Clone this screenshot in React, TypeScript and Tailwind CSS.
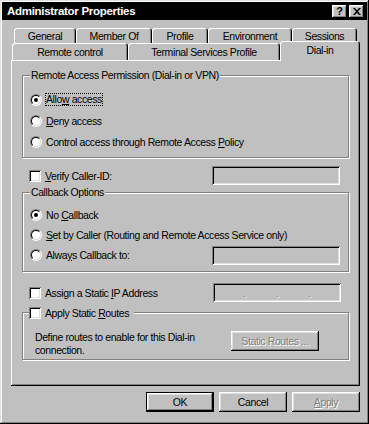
import React from "react";

const RAISED =
  "shadow-[inset_-1px_-1px_0_#000,inset_1px_1px_0_#fff,inset_-2px_-2px_0_#808080,inset_2px_2px_0_#dfdfdf]";
const SUNKEN =
  "shadow-[inset_1px_1px_0_#808080,inset_-1px_-1px_0_#fff,inset_2px_2px_0_#000,inset_-2px_-2px_0_#dfdfdf]";
const ETCHED = "border border-[#808080] shadow-[1px_1px_0_#fff,inset_1px_1px_0_#fff]";
const DISABLED = "text-[#808080] [text-shadow:1px_1px_0_#fff]";

function Radio({ checked }: { checked?: boolean }) {
  return (
    <span className="inline-flex w-[12px] h-[12px] shrink-0 rounded-full border border-t-[#808080] border-l-[#808080] border-r-white border-b-white">
      <span className="flex w-full h-full items-center justify-center rounded-full border border-t-black border-l-black border-r-[#dfdfdf] border-b-[#dfdfdf] bg-white">
        {checked && <span className="w-[4px] h-[4px] rounded-full bg-black" />}
      </span>
    </span>
  );
}

function Check() {
  return <span className={`inline-block w-[12px] h-[12px] shrink-0 bg-white ${SUNKEN}`} />;
}

function TextBox({ children }: { children?: React.ReactNode }) {
  return (
    <div className={`w-[128px] h-[19px] shrink-0 bg-[#c0c0c0] ${SUNKEN} flex items-center justify-evenly`}>
      {children}
    </div>
  );
}

function Tab({
  label,
  w,
  h,
  selected,
}: {
  label: string;
  w: string;
  h: string;
  selected?: boolean;
}) {
  return (
    <div
      className={`${w} ${h} shrink-0 flex items-center justify-center rounded-t-[3px] bg-[#c0c0c0] shadow-[inset_1px_1px_0_#fff,inset_-1px_0_0_#000,inset_-2px_0_0_#808080] ${
        selected ? "relative z-10 -mb-[1px] pb-[2px]" : ""
      }`}
    >
      {label}
    </div>
  );
}

function Btn({
  children,
  w,
  def,
  disabled,
}: {
  children: React.ReactNode;
  w: string;
  def?: boolean;
  disabled?: boolean;
}) {
  return (
    <div className={`${w} h-[20px] shrink-0 ${def ? "border border-black" : ""}`}>
      <div
        className={`w-full h-full flex items-center justify-center bg-[#c0c0c0] ${RAISED} ${
          disabled ? DISABLED : ""
        }`}
      >
        {children}
      </div>
    </div>
  );
}

function TitleBtn({ children }: { children: React.ReactNode }) {
  return (
    <div className={`w-[15px] h-[13px] bg-[#c0c0c0] ${RAISED} flex items-center justify-center`}>
      {children}
    </div>
  );
}

export default function App() {
  return (
    <div className="w-[369px] h-[424px] overflow-hidden bg-[#c0c0c0] p-[2px] font-['Liberation_Sans',Arial,sans-serif] text-black text-[10.5px] tracking-[-0.4px] leading-[12px] shadow-[inset_-1px_-1px_0_#000,inset_1px_1px_0_#dfdfdf,inset_-2px_-2px_0_#808080,inset_2px_2px_0_#fff]">
      {/* Title bar */}
      <div className="h-[18px] bg-black flex items-center pl-[5px] pr-[3px]">
        <span className="flex-1 text-white font-bold text-[11.5px] tracking-[-0.3px]">
          Administrator Properties
        </span>
        <div className="flex gap-[2px]">
          <TitleBtn>
            <span className="font-bold text-[11px] leading-[11px] tracking-normal">?</span>
          </TitleBtn>
          <TitleBtn>
            <svg width="8" height="7" viewBox="0 0 8 7">
              <path d="M0 0h2l2 2.3L6 0h2L5 3.5 8 7H6L4 4.7 2 7H0l3-3.5z" fill="#000" />
            </svg>
          </TitleBtn>
        </div>
      </div>

      <div className="pl-[9px] pt-[8px]">
        {/* Tabs row 1 */}
        <div className="flex ml-[3px] h-[15px]">
          <Tab label="General" w="w-[62px]" h="h-[15px]" />
          <Tab label="Member Of" w="w-[76px]" h="h-[15px]" />
          <Tab label="Profile" w="w-[56px]" h="h-[15px]" />
          <Tab label="Environment" w="w-[84px]" h="h-[15px]" />
          <Tab label="Sessions" w="w-[65px]" h="h-[15px]" />
        </div>
        {/* Tabs row 2 */}
        <div className="flex ml-[1px] -mt-[2px] h-[19px] items-end">
          <Tab label="Remote control" w="w-[116px]" h="h-[17px]" />
          <Tab label="Terminal Services Profile" w="w-[152px]" h="h-[17px]" />
          <Tab label="Dial-in" w="w-[80px]" h="h-[20px]" selected />
        </div>

        {/* Panel */}
        <div className="w-[349px] h-[326px] shadow-[inset_-1px_-1px_0_#000,inset_1px_1px_0_#fff,inset_-2px_-2px_0_#808080] pl-[11px] pt-[9px]">
          {/* Group 1 */}
          <fieldset className={`w-[327px] ${ETCHED} pl-[7px] pb-[5px]`}>
            <legend className="px-[1px] bg-[#c0c0c0]">Remote Access Permission (Dial-in or VPN)</legend>
            <div className="pt-[8px]">
              <div className="flex items-center h-[21px]">
                <Radio checked />
                <span className="ml-[3px] border border-dotted border-black px-0 leading-[11px]">
                  Allo<u>w</u> access
                </span>
              </div>
              <div className="flex items-center h-[21px]">
                <Radio />
                <span className="ml-[4px]">
                  <u>D</u>eny access
                </span>
              </div>
              <div className="flex items-center h-[21px]">
                <Radio />
                <span className="ml-[4px]">
                  Control access through Remote Access <u>P</u>olicy
                </span>
              </div>
            </div>
          </fieldset>

          {/* Verify Caller-ID */}
          <div className="flex items-center w-[327px] h-[19px] mt-[8px] pl-[7px] pr-[9px]">
            <Check />
            <span className="ml-[4px] flex-1">
              <u>V</u>erify Caller-ID:
            </span>
            <TextBox />
          </div>

          {/* Group 2 */}
          <fieldset className={`w-[327px] mt-[1px] ${ETCHED} pl-[7px] pr-[8px] pb-[6px]`}>
            <legend className="px-[1px] bg-[#c0c0c0]">Callback Options</legend>
            <div className="pt-[7px]">
              <div className="flex items-center h-[20px]">
                <Radio checked />
                <span className="ml-[4px]">
                  No <u>C</u>allback
                </span>
              </div>
              <div className="flex items-center h-[20px]">
                <Radio />
                <span className="ml-[4px]">
                  <u>S</u>et by Caller (Routing and Remote Access Service only)
                </span>
              </div>
              <div className="flex items-center h-[20px]">
                <Radio />
                <span className="ml-[4px] flex-1">
                  Alwa<u>y</u>s Callback to:
                </span>
                <TextBox />
              </div>
            </div>
          </fieldset>

          {/* Static IP */}
          <div className="flex items-center w-[327px] h-[19px] mt-[11px] pl-[7px] pr-[8px]">
            <Check />
            <span className="ml-[4px] flex-1">
              Assign a Static <u>I</u>P Address
            </span>
            <TextBox>
              <span className={DISABLED}>.</span>
              <span className={DISABLED}>.</span>
              <span className={DISABLED}>.</span>
            </TextBox>
          </div>

          {/* Group 3 */}
          <fieldset className={`w-[327px] mt-[4px] ${ETCHED} pl-[6px] pb-[2px]`}>
            <legend className="pr-[5px] bg-[#c0c0c0]">
              <span className="flex items-center h-[13px]">
                <Check />
                <span className="ml-[4px]">
                  Apply Static <u>R</u>outes
                </span>
              </span>
            </legend>
            <div className="flex items-start pl-[6px] pt-[12px]">
              <div className="w-[196px] leading-[13px]">
                Define routes to enable for this Dial-in
                <br />
                connection.
              </div>
              <Btn w="w-[88px]" disabled>
                Static Routes ...
              </Btn>
            </div>
          </fieldset>
        </div>

        {/* Buttons */}
        <div className="flex justify-end gap-[5px] w-[349px] mt-[6px]">
          <Btn w="w-[68px]" def>
            OK
          </Btn>
          <Btn w="w-[68px]">Cancel</Btn>
          <Btn w="w-[68px]" disabled>
            <span>
              <u>A</u>pply
            </span>
          </Btn>
        </div>
      </div>
    </div>
  );
}
